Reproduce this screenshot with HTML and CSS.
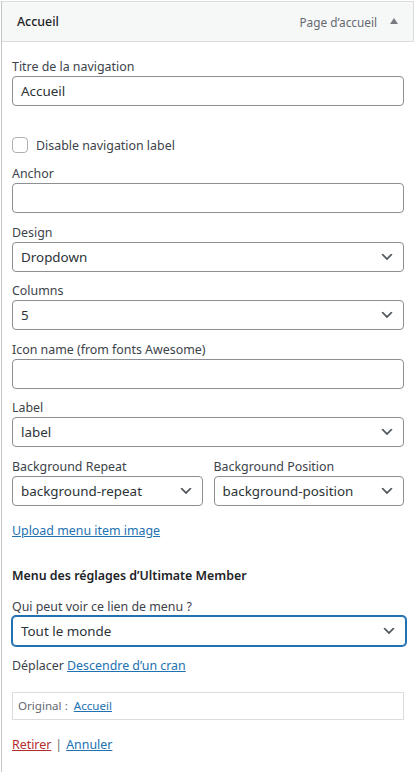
FILE: index.html
```html
<!DOCTYPE html>
<html lang="fr">
<head>
<meta charset="utf-8">
<link rel="stylesheet" href="styles.css">
</head>
<body>
<div class="item">
  <div class="item-bar">
    <span class="item-title">Accueil</span>
    <span class="item-controls"><span class="item-type">Page d’accueil</span><span class="arrow"></span></span>
  </div>
  <div class="settings">
    <div class="field first">
      <div class="label">Titre de la navigation</div>
      <div class="input">Accueil</div>
    </div>
    <div class="check-row">
      <span class="checkbox"></span>
      <span class="check-text">Disable navigation label</span>
    </div>
    <div class="field">
      <div class="label">Anchor</div>
      <div class="input"></div>
    </div>
    <div class="field">
      <div class="label">Design</div>
      <div class="select"><span>Dropdown</span><svg class="chev" viewBox="0 0 20 20"><path d="M5 6l5 5 5-5 2 1-7 7-7-7z"/></svg></div>
    </div>
    <div class="field">
      <div class="label">Columns</div>
      <div class="select"><span>5</span><svg class="chev" viewBox="0 0 20 20"><path d="M5 6l5 5 5-5 2 1-7 7-7-7z"/></svg></div>
    </div>
    <div class="field">
      <div class="label">Icon name (from fonts Awesome)</div>
      <div class="input"></div>
    </div>
    <div class="field">
      <div class="label">Label</div>
      <div class="select"><span>label</span><svg class="chev" viewBox="0 0 20 20"><path d="M5 6l5 5 5-5 2 1-7 7-7-7z"/></svg></div>
    </div>
    <div class="field-row">
      <div class="field half">
        <div class="label">Background Repeat</div>
        <div class="select"><span>background-repeat</span><svg class="chev" viewBox="0 0 20 20"><path d="M5 6l5 5 5-5 2 1-7 7-7-7z"/></svg></div>
      </div>
      <div class="field half">
        <div class="label">Background Position</div>
        <div class="select"><span>background-position</span><svg class="chev" viewBox="0 0 20 20"><path d="M5 6l5 5 5-5 2 1-7 7-7-7z"/></svg></div>
      </div>
    </div>
    <div class="upload"><a href="#" class="link">Upload menu item image</a></div>
    <div class="um-title">Menu des réglages d’Ultimate Member</div>
    <div class="field um">
      <div class="label">Qui peut voir ce lien de menu ?</div>
      <div class="select focus"><span>Tout le monde</span><svg class="chev" viewBox="0 0 20 20"><path d="M5 6l5 5 5-5 2 1-7 7-7-7z"/></svg></div>
    </div>
    <div class="move">Déplacer <a href="#" class="link">Descendre d’un cran</a></div>
    <div class="original">Original : <a href="#" class="link">Accueil</a></div>
    <div class="actions"><a href="#" class="delete">Retirer</a><span class="sep">|</span><a href="#" class="link">Annuler</a></div>
  </div>
</div>
</body>
</html>
```

FILE: styles.css
```css
* { box-sizing: border-box; }
html, body { margin: 0; padding: 0; background: #fff; }
body {
  font-family: "Noto Sans", "Open Sans", sans-serif;
  font-size: 12.4px;
  color: #3c434a;
  width: 414px;
  height: 772px;
  overflow: hidden;
}
.item {
  margin-top: 1px;
  margin-left: 1px;
  border-left: 1px solid #c3c4c7;
  height: 771px;
}
.item-bar {
  height: 41px;
  background: #f6f7f7;
  border-top: 1px solid #dcdcde;
  border-bottom: 1px solid #dcdcde;
  border-right: 1px solid #dcdcde;
  display: flex;
  align-items: center;
  justify-content: space-between;
  padding: 0 15px 0 15px;
}
.item-title {
  font-weight: 500;
  color: #1d2327;
}
.item-controls {
  display: flex;
  align-items: center;
  gap: 13px;
}
.item-type {
  color: #646970;
  font-size: 11.8px;
}
.arrow {
  width: 0;
  height: 0;
  border-left: 4px solid transparent;
  border-right: 4px solid transparent;
  border-bottom: 6px solid #787c82;
  margin-bottom: 2px;
}
.settings {
  padding: 15px 10px 0 10px;
}
.field {
  margin-bottom: 9.5px;
}
.label {
  line-height: 19px;
  height: 19px;
}
.input, .select {
  height: 30px;
  border: 1px solid #8c8f94;
  border-radius: 4px;
  font-size: 13.4px;
  color: #2c3338;
  padding: 0 8px;
  display: flex;
  align-items: center;
  background: #fff;
}
.select {
  justify-content: space-between;
  padding: 0 8px 0 8px;
}
.chev {
  width: 16px;
  height: 16px;
  fill: #50575e;
  flex: none;
}
.check-row {
  display: flex;
  align-items: center;
  gap: 8px;
  margin-top: 30px;
  margin-bottom: 10px;
  height: 18px;
}
.checkbox {
  width: 16px;
  height: 16px;
  border: 1px solid #8c8f94;
  border-radius: 4px;
  opacity: 0.7;
}
.field-row {
  display: flex;
  gap: 11px;
}
.field-row .half {
  flex: 1;
}
.link {
  color: #2271b1;
  text-decoration: underline;
}
.upload {
  margin-top: 6px;
  line-height: 19px;
}
.um-title {
  margin-top: 26px;
  font-weight: 600;
  color: #1d2327;
  line-height: 19px;
}
.field.um {
  margin-top: 12px;
}
.select.focus {
  border-color: #2271b1;
  box-shadow: 0 0 0 1px #2271b1;
  margin-right: -2px;
}
.move {
  line-height: 19px;
  margin-top: 0;
}
.original {
  margin-top: 17px;
  height: 28px;
  border: 1px solid #dcdcde;
  padding: 0 5px;
  display: flex;
  align-items: center;
  gap: 6px;
  color: #646970;
  font-size: 11.6px;
}
.actions {
  margin-top: 15px;
  line-height: 19px;
  display: flex;
  gap: 4px;
}
.delete {
  color: #b32d2e;
  text-decoration: underline;
}
.sep { color: #646970; }
```
